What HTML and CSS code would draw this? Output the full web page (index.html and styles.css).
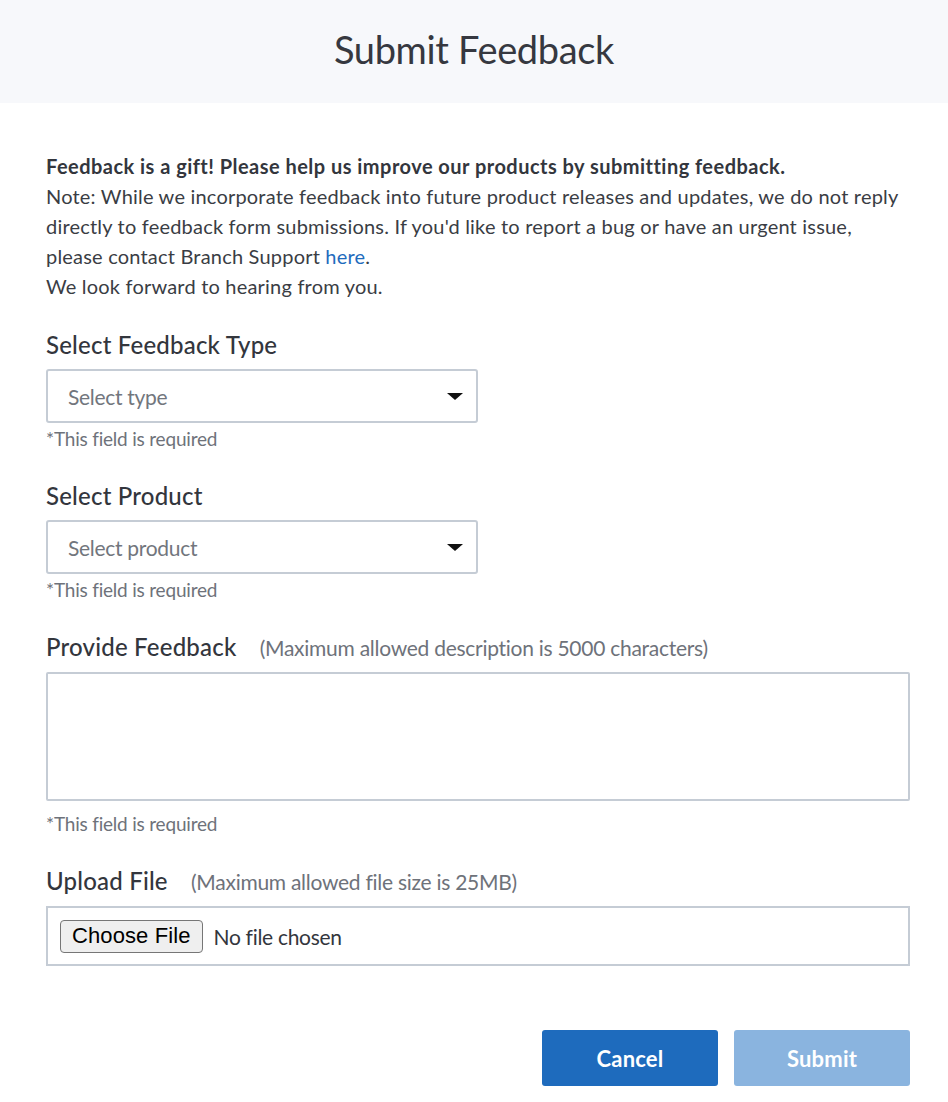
FILE: index.html
```html
<!DOCTYPE html>
<html lang="en">
<head>
<meta charset="utf-8">
<title>Submit Feedback</title>
<link rel="stylesheet" href="styles.css">
</head>
<body>
<div class="modal">
  <header class="modal-header">
    <h1 class="modal-title">Submit Feedback</h1>
  </header>
  <div class="modal-body">
    <div class="intro">
      <p class="intro-lead">Feedback is a gift! Please help us improve our products by submitting feedback.</p>
      <p>Note: While we incorporate feedback into future product releases and updates, we do not reply<br>directly to feedback form submissions. If you'd like to report a bug or have an urgent issue,<br>please contact Branch Support <a class="link" href="#">here</a>.</p>
      <p>We look forward to hearing from you.</p>
    </div>

    <div class="field field-first">
      <label class="field-label">Select Feedback Type</label>
      <div class="select">
        <span class="select-placeholder">Select type</span>
        <span class="caret"></span>
      </div>
      <div class="field-hint">*This field is required</div>
    </div>

    <div class="field">
      <label class="field-label">Select Product</label>
      <div class="select">
        <span class="select-placeholder">Select product</span>
        <span class="caret"></span>
      </div>
      <div class="field-hint">*This field is required</div>
    </div>

    <div class="field">
      <label class="field-label">Provide Feedback <span class="label-note">(Maximum allowed description is 5000 characters)</span></label>
      <div class="textarea"></div>
      <div class="field-hint field-hint-wide">*This field is required</div>
    </div>

    <div class="field">
      <label class="field-label">Upload File <span class="label-note">(Maximum allowed file size is 25MB)</span></label>
      <div class="file-box">
        <span class="file-button">Choose File</span>
        <span class="file-status">No file chosen</span>
      </div>
    </div>

    <div class="actions">
      <button class="btn btn-primary">Cancel</button>
      <button class="btn btn-disabled">Submit</button>
    </div>
  </div>
</div>
</body>
</html>
```

FILE: styles.css
```css
* { box-sizing: border-box; }
html, body {
  margin: 0;
  padding: 0;
  background: #ffffff;
}
body {
  font-family: "Lato", "Noto Sans", sans-serif;
  color: #33363d;
}
.modal {
  width: 948px;
}
.modal-header {
  background: #f7f8fb;
  height: 103px;
  display: flex;
  align-items: center;
  justify-content: center;
  padding-bottom: 6px;
}
.modal-title {
  margin: 0;
  font-size: 38px;
  font-weight: 400;
  color: #363840;
  letter-spacing: -0.35px;
}
.modal-body {
  padding: 48px 38px 16px 46px;
}
.intro {
  font-size: 20px;
  line-height: 30px;
  color: #3a3d44;
  letter-spacing: 0.2px;
  white-space: nowrap;
}
.intro p { margin: 0; }
.intro-lead {
  font-weight: 700;
  color: #33363d;
  letter-spacing: 0.47px;
}
.link {
  color: #1e6bbd;
  text-decoration: none;
}
.field {
  margin-top: 29px;
  display: flex;
  flex-direction: column;
}
.field-first {
  margin-top: 28px;
}
.field-label {
  font-size: 24px;
  line-height: 32px;
  font-weight: 500;
  color: #33363d;
  margin-bottom: 8px;
  letter-spacing: 0.2px;
}
.label-note {
  font-size: 21px;
  font-weight: 400;
  color: #6e727a;
  margin-left: 17px;
  letter-spacing: -0.27px;
}
.select {
  width: 432px;
  height: 54px;
  border: 2px solid #c5ccd5;
  border-radius: 3px;
  display: flex;
  align-items: center;
  justify-content: space-between;
  padding: 0 13px 0 20px;
}
.select-placeholder {
  font-size: 21px;
  color: #72767d;
  letter-spacing: -0.3px;
}
.caret {
  width: 0;
  height: 0;
  border-left: 8px solid transparent;
  border-right: 8px solid transparent;
  border-top: 7px solid #111;
}
.field-hint {
  font-size: 19px;
  line-height: 24px;
  color: #6e727a;
  margin-top: 4px;
  letter-spacing: -0.2px;
}
.field-hint-wide {
  margin-top: 11px;
}
.textarea {
  width: 864px;
  height: 129px;
  border: 2px solid #c5ccd5;
  border-radius: 2px;
}
.file-box {
  width: 864px;
  height: 60px;
  border: 2px solid #c5ccd5;
  display: flex;
  align-items: center;
  padding: 0 12px;
}
.file-button {
  font-family: "Liberation Sans", Arial, sans-serif;
  font-size: 22px;
  color: #000;
  background: #efefef;
  border: 1.5px solid #767676;
  border-radius: 4px;
  height: 33px;
  padding: 0 11px;
  display: flex;
  align-items: center;
  letter-spacing: 0.1px;
}
.file-status {
  margin-left: 11px;
  font-size: 21px;
  color: #33363d;
  letter-spacing: -0.3px;
}
.actions {
  display: flex;
  justify-content: flex-end;
  gap: 16px;
  margin-top: 64px;
}
.btn {
  width: 176px;
  height: 56px;
  border: none;
  border-radius: 3px;
  font-family: "Lato", "Noto Sans", sans-serif;
  font-size: 22px;
  font-weight: 700;
  color: #ffffff;
  letter-spacing: 0.2px;
}
.btn-primary { background: #1e6bbd; }
.btn-disabled { background: #8ab4df; }
```
